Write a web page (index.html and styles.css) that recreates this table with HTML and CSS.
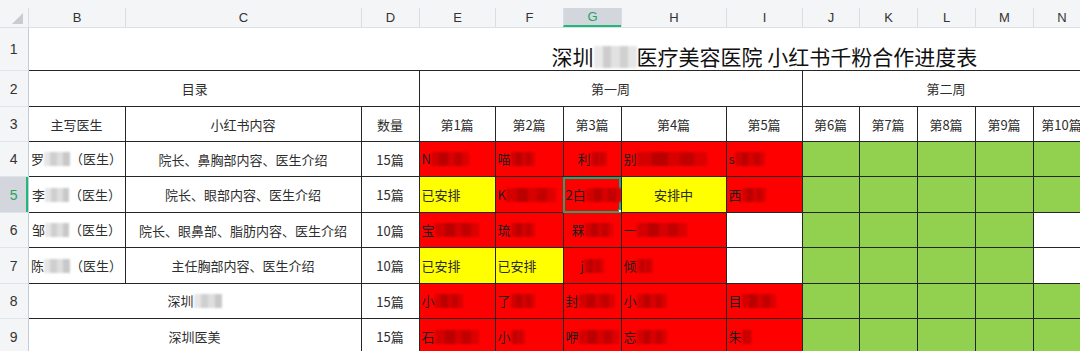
FILE: index.html
```html
<!DOCTYPE html>
<html lang="zh-CN">
<head>
<meta charset="utf-8">
<title>小红书千粉合作进度表</title>
<link rel="stylesheet" href="styles.css">
</head>
<body>
<table class="sheet">
  <colgroup>
    <col class="c-rh"><col class="c-b"><col class="c-c"><col class="c-d"><col class="c-e"><col class="c-f"><col class="c-g"><col class="c-h"><col class="c-i"><col class="c-j"><col class="c-k"><col class="c-l"><col class="c-m"><col class="c-n">
  </colgroup>
  <thead>
    <tr class="colhead">
      <th class="corner"><div class="ch first"><span class="tri"></span></div></th>
      <th><div class="ch">B</div></th>
      <th><div class="ch">C</div></th>
      <th><div class="ch">D</div></th>
      <th><div class="ch">E</div></th>
      <th><div class="ch">F</div></th>
      <th><div class="ch sel">G</div></th>
      <th><div class="ch">H</div></th>
      <th><div class="ch">I</div></th>
      <th><div class="ch">J</div></th>
      <th><div class="ch">K</div></th>
      <th><div class="ch">L</div></th>
      <th><div class="ch">M</div></th>
      <th><div class="ch">N</div></th>
    </tr>
  </thead>
  <tbody>
    <tr class="h43">
      <td class="rh">1</td>
      <td colspan="13" class="title">深圳<span class="bz bz-t"></span>医疗美容医院 小红书千粉合作进度表</td>
    </tr>
    <tr class="h36">
      <td class="rh">2</td>
      <td colspan="2" class="g mid nr">目录</td>
      <td class="g nl"></td>
      <td colspan="5" class="g mid">第一周</td>
      <td colspan="5" class="g mid">第二周</td>
    </tr>
    <tr class="h35">
      <td class="rh">3</td>
      <td class="g mid">主写医生</td>
      <td class="g mid">小红书内容</td>
      <td class="g mid">数量</td>
      <td class="g mid">第1篇</td>
      <td class="g mid">第2篇</td>
      <td class="g mid">第3篇</td>
      <td class="g mid">第4篇</td>
      <td class="g mid">第5篇</td>
      <td class="g mid">第6篇</td>
      <td class="g mid">第7篇</td>
      <td class="g mid">第8篇</td>
      <td class="g mid">第9篇</td>
      <td class="g mid">第10篇</td>
    </tr>
    <tr class="h35">
      <td class="rh">4</td>
      <td class="g mid">罗<span class="bz bz-g w26"></span>（医生）</td>
      <td class="g mid">院长、鼻胸部内容、医生介绍</td>
      <td class="g mid">15篇</td>
      <td class="g red">N<span class="bz bz-r w38"></span></td>
      <td class="g red">喵<span class="bz bz-r w24"></span></td>
      <td class="g red mid">利<span class="bz bz-r w16"></span></td>
      <td class="g red">别<span class="bz bz-r w70"></span></td>
      <td class="g red">s<span class="bz bz-r w30"></span></td>
      <td class="g grn"></td><td class="g grn"></td><td class="g grn"></td><td class="g grn"></td><td class="g grn"></td>
    </tr>
    <tr class="h36">
      <td class="rh rsel">5</td>
      <td class="g mid">李<span class="bz bz-g w24"></span>（医生）</td>
      <td class="g mid">院长、眼部内容、医生介绍</td>
      <td class="g mid">15篇</td>
      <td class="g yel">已安排</td>
      <td class="g red">K<span class="bz bz-r w50"></span></td>
      <td class="g red cur">2白<span class="bz bz-r w36"></span></td>
      <td class="g yel mid">安排中</td>
      <td class="g red">西<span class="bz bz-r w24"></span></td>
      <td class="g grn"></td><td class="g grn"></td><td class="g grn"></td><td class="g grn"></td><td class="g grn"></td>
    </tr>
    <tr class="h35 soft">
      <td class="rh">6</td>
      <td class="g mid tight">邹<span class="bz bz-g w24"></span>（医生）</td>
      <td class="g mid">院长、眼鼻部、脂肪内容、医生介绍</td>
      <td class="g mid">10篇</td>
      <td class="g red">宝<span class="bz bz-r w44"></span></td>
      <td class="g red">琉<span class="bz bz-r w24"></span></td>
      <td class="g red mid">槑<span class="bz bz-r w28"></span></td>
      <td class="g red">一<span class="bz bz-r w50"></span></td>
      <td class="g"></td>
      <td class="g grn"></td><td class="g grn"></td><td class="g grn"></td><td class="g grn"></td><td class="g"></td>
    </tr>
    <tr class="h36">
      <td class="rh">7</td>
      <td class="g mid">陈<span class="bz bz-g w26"></span>（医生）</td>
      <td class="g mid">主任胸部内容、医生介绍</td>
      <td class="g mid">10篇</td>
      <td class="g yel">已安排</td>
      <td class="g yel">已安排</td>
      <td class="g red mid">j<span class="bz bz-r w20"></span></td>
      <td class="g red">倾<span class="bz bz-r w16"></span></td>
      <td class="g"></td>
      <td class="g grn"></td><td class="g grn"></td><td class="g grn"></td><td class="g grn"></td><td class="g"></td>
    </tr>
    <tr class="h35 soft">
      <td class="rh">8</td>
      <td colspan="2" class="g mid">深圳<span class="bz bz-g w28"></span></td>
      <td class="g mid">15篇</td>
      <td class="g red">小<span class="bz bz-r w28"></span></td>
      <td class="g red">了<span class="bz bz-r w24"></span></td>
      <td class="g red">封<span class="bz bz-r w36"></span></td>
      <td class="g red">小<span class="bz bz-r w30"></span></td>
      <td class="g red">目<span class="bz bz-r w34"></span></td>
      <td class="g grn"></td><td class="g grn"></td><td class="g grn"></td><td class="g grn"></td><td class="g grn"></td>
    </tr>
    <tr class="h36">
      <td class="rh">9</td>
      <td colspan="2" class="g mid">深圳医美</td>
      <td class="g mid">15篇</td>
      <td class="g red">石<span class="bz bz-r w44"></span></td>
      <td class="g red">小<span class="bz bz-r w14"></span></td>
      <td class="g red">咿<span class="bz bz-r w40"></span></td>
      <td class="g red">忘<span class="bz bz-r w30"></span></td>
      <td class="g red">朱<span class="bz bz-r w10"></span></td>
      <td class="g grn"></td><td class="g grn"></td><td class="g grn"></td><td class="g grn"></td><td class="g grn"></td>
    </tr>
  </tbody>
</table>
</body>
</html>
```
FILE: styles.css
```css
html, body {
  margin: 0;
  padding: 0;
  background: #ffffff;
  overflow: hidden;
}

body {
  font-family: "Noto Sans CJK SC", "Noto Sans", sans-serif;
  color: #333333;
}

.sheet {
  border-collapse: collapse;
  table-layout: fixed;
  width: 1090px;
  font-size: 13px;
  line-height: 1;
}

.c-rh { width: 28px; }
.c-b { width: 97px; }
.c-c { width: 236px; }
.c-d { width: 58px; }
.c-e { width: 76px; }
.c-f { width: 68px; }
.c-g { width: 58px; }
.c-h { width: 105px; }
.c-i { width: 76px; }
.c-j { width: 57px; }
.c-k { width: 58px; }
.c-l { width: 58px; }
.c-m { width: 58px; }
.c-n { width: 57px; }

/* column header */
.colhead { height: 27px; }
.colhead th {
  padding: 0;
  height: 27px;
  background: #f4f5f7;
  vertical-align: bottom;
  border-bottom: 1px solid #dcdfe5;
  font-family: "Liberation Sans", "Noto Sans", sans-serif;
  font-weight: 400;
  font-size: 13px;
  color: #333333;
}
.ch {
  height: 19px;
  line-height: 19px;
  text-align: center;
  border-left: 1px solid #d9dde4;
  box-sizing: border-box;
}
.ch.first {
  border-left: none;
  text-align: right;
  padding-right: 5px;
}
.ch.sel {
  background: #d3d6dc;
  color: #21a366;
  border-bottom: 2px solid #1fb877;
  line-height: 17px;
}
.tri {
  display: inline-block;
  width: 0;
  height: 0;
  border-left: 11px solid transparent;
  border-bottom: 11px solid #c9cbcf;
  vertical-align: bottom;
  margin-bottom: 3px;
}

/* row heights */
.h43 { height: 43px; }
.h36 { height: 36px; }
.h35 { height: 35px; }

td {
  padding: 0 2px;
  white-space: nowrap;
  overflow: hidden;
  vertical-align: middle;
}
td.tight { padding: 0; }

/* row header */
.rh {
  background: #f4f5f7;
  text-align: center;
  font-family: "Liberation Sans", "Noto Sans", sans-serif;
  font-size: 14px;
  color: #333333;
  padding: 0;
  border-right: 1px solid #c3ccdb;
  border-bottom: 1px solid #e0e3e9;
}
.rh.rsel {
  background: #d3d6dc;
  color: #21a366;
  box-shadow: inset -2px 0 0 #1fb877;
}

.title {
  font-size: 21px;
  line-height: 21px;
  color: #111111;
  vertical-align: bottom;
  padding: 0 0 2px 523px;
}

.g {
  border: 1px solid #262626;
  color: #2e2e2e;
}
.soft td.g { border-top-color: #8c8c8c; }
.nr { border-right: hidden; }
.nl { border-left: hidden; }

.mid { text-align: center; }

.red { background: #ff0000; color: #1c1c1c; }
.yel { background: #ffff00; color: #2a2a2a; }
.grn { background: #92d050; }

.cur {
  position: relative;
  outline: 2px solid #1fa672;
  outline-offset: -2px;
}
.cur::after {
  content: "";
  position: absolute;
  right: -3px;
  bottom: -3px;
  width: 4px;
  height: 4px;
  background: #ffffff;
  border: 1px solid #1fa672;
}

/* redaction mosaics */
.bz {
  display: inline-block;
  height: 14px;
  vertical-align: -2px;
  filter: blur(0.8px);
}
.bz-r {
  background: linear-gradient(90deg, #d40000 0 22%, #bb0000 22% 45%, #d80000 45% 62%, #c20000 62% 82%, #dc0000 82% 100%);
}
.bz-g {
  background: linear-gradient(90deg, #e6e6e6 0 25%, #cfcfcf 25% 50%, #dedede 50% 75%, #c8c8c8 75% 100%);
}
.bz-t {
  width: 43px;
  height: 22px;
  vertical-align: -3px;
  background: linear-gradient(90deg, #e9e9e9 0 20%, #cdcdcd 20% 40%, #e2e2e2 40% 60%, #d0d0d0 60% 80%, #e6e6e6 80% 100%);
}
.w10 { width: 10px; }
.w14 { width: 14px; }
.w16 { width: 16px; }
.w20 { width: 20px; }
.w24 { width: 24px; }
.w26 { width: 26px; }
.w28 { width: 28px; }
.w30 { width: 30px; }
.w32 { width: 32px; }
.w34 { width: 34px; }
.w36 { width: 36px; }
.w38 { width: 38px; }
.w40 { width: 40px; }
.w44 { width: 44px; }
.w50 { width: 50px; }
.w70 { width: 70px; }
```
